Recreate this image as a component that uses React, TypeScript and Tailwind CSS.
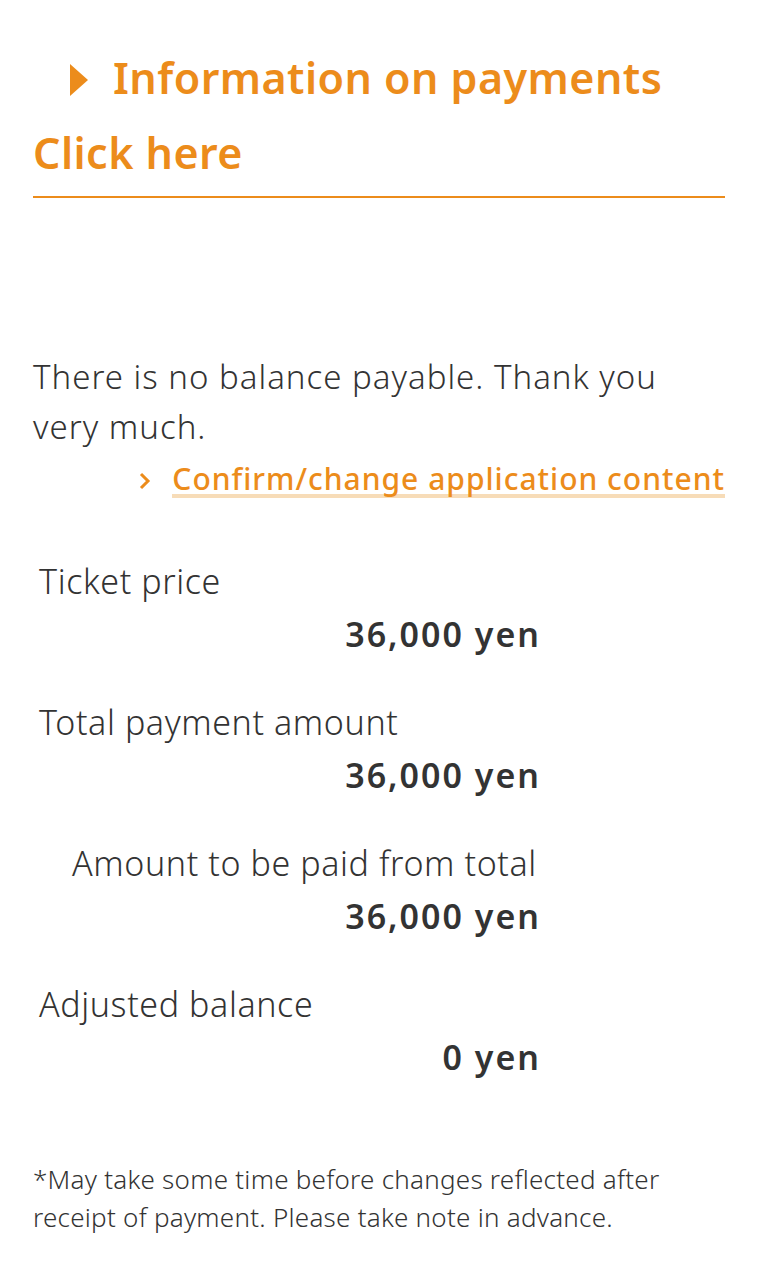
import React from "react";

const rows = [
  { label: "Ticket price", value: "36,000 yen", indent: false },
  { label: "Total payment amount", value: "36,000 yen", indent: false },
  { label: "Amount to be paid from total", value: "36,000 yen", indent: true },
  { label: "Adjusted balance", value: "0 yen", indent: false },
];

export default function App() {
  return (
    <div className="w-[758px] min-h-[1280px] bg-white px-[33px] pt-[40px] text-[#333333]" style={{ fontFamily: '"Noto Sans", "Liberation Sans", sans-serif' }}>
      <div className="border-b-2 border-[#ec8c1b] pb-[6px]">
        <p className="text-[43px] font-semibold leading-[75px] text-[#ec8c1b] tracking-[0.45px]">
          <span className="inline-block pl-[37px] pr-[25px] align-middle">
            <svg width="18" height="32" viewBox="0 0 18 32" className="block -mt-[4px]">
              <polygon points="0,0 18,16 0,32" fill="#ec8c1b" />
            </svg>
          </span>
          Information on payments Click here
        </p>
      </div>

      <p className="mt-[154px] text-[33px] font-light leading-[50px] tracking-[1px]">
        There is no balance payable. Thank you very much.
      </p>
      <div className="mt-[12px] flex justify-end items-center">
        <span className="mr-[21px]">
          <svg width="12" height="20" viewBox="0 0 12 20" className="block">
            <polyline points="2,3 9,10 2,17" fill="none" stroke="#ec8c1b" strokeWidth="3" />
          </svg>
        </span>
        <span className="text-[30px] font-medium leading-[30px] tracking-[1px] text-[#ec8c1b] border-b-[4px] border-[#f7dcb8]">
          Confirm/change application content
        </span>
      </div>

      <div className="mt-[57px] w-[507px]">
        {rows.map((r, i) => (
          <div key={i} className={i === 0 ? "" : "mt-[35px]"}>
            <div className={`text-[34px] font-light leading-[53px] tracking-[0.6px] whitespace-nowrap ${r.indent ? "pl-[39px]" : "pl-[6px]"}`}>{r.label}</div>
            <div className="text-right text-[34px] font-semibold leading-[53px] tracking-[2px] -mr-[1px]">{r.value}</div>
          </div>
        ))}
      </div>

      <p className="mt-[76px] text-[26px] font-light leading-[38px] tracking-[0.25px]">
        *May take some time before changes reflected after receipt of payment. Please take note in advance.
      </p>
    </div>
  );
}
